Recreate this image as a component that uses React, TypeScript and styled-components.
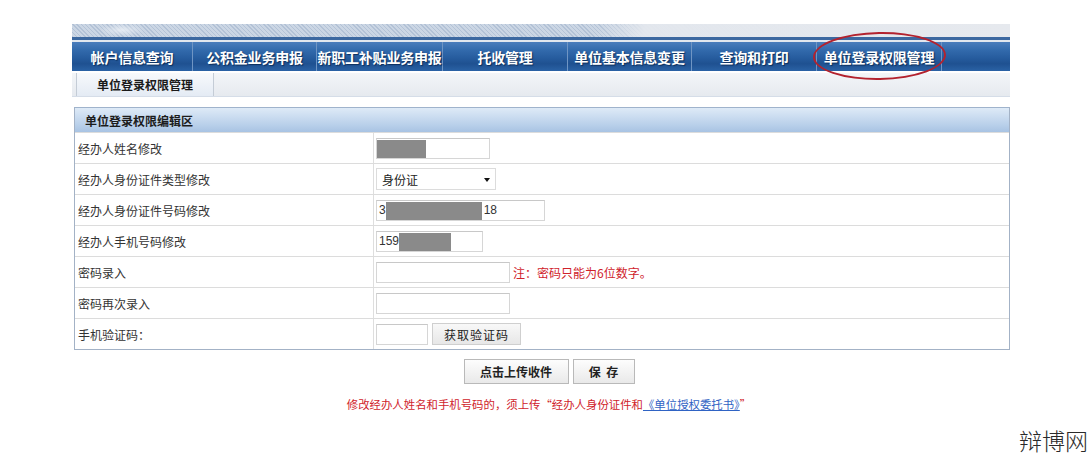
import React from "react"
import styled, { createGlobalStyle } from "styled-components"

const GlobalStyle = createGlobalStyle`
  html, body {
    margin: 0;
    padding: 0;
    background: #ffffff;
  }
  body {
    font-family: "Noto Sans CJK SC", "Liberation Sans", sans-serif;
    font-size: 12px;
    color: #333;
  }
`

const Page = styled.div`
  position: relative;
  width: 1092px;
  height: 459px;
  overflow: hidden;
  padding-top: 24px;
  box-sizing: border-box;
`
const Frame = styled.div`
  margin-left: 72px;
  width: 938px;
`
const Banner = styled.div`
  height: 13px;
  background:
    radial-gradient(ellipse 22px 6px at 50px 6px, rgba(235, 240, 246, 0.85), transparent),
    linear-gradient(100deg, transparent 0 56%, rgba(228, 232, 238, 0.95) 61%, #e6e9ee 100%),
    repeating-linear-gradient(45deg, #b3c2d6 0 1px, #cbd6e4 1px 3px);
  border-bottom: 3px solid #3c68a0;
  box-shadow: 0 2px 0 #e2e7ee;
`
const Nav = styled.nav`
  margin-top: 2px;
  height: 29px;
  display: flex;
  background: linear-gradient(
    #4a7dbc 0%,
    #3169ab 30%,
    #265c9e 55%,
    #1f5191 75%,
    #2a62a5 100%
  );
`
const NavItem = styled.div<{ w: number }>`
  position: relative;
  width: ${({ w }) => w}px;
  flex: none;
  display: flex;
  align-items: center;
  justify-content: center;
  border-right: 1px solid #6f95c4;
  box-sizing: border-box;
  color: #ffffff;
  font-size: 14px;
  font-weight: 700;
  white-space: nowrap;
  letter-spacing: -0.2px;
  text-shadow: 1px 1px 1px #0d2f5c;
`
const Circle = styled.div`
  position: absolute;
  left: -4px;
  top: -10px;
  width: 129px;
  height: 44px;
  border: 2px solid #b3222e;
  border-radius: 50%;
  transform: rotate(-1deg);
  pointer-events: none;
`
const SubBar = styled.div`
  margin-top: 2px;
  height: 23px;
  display: flex;
  background: linear-gradient(#f3f5f8, #e6eaef);
  border-bottom: 1px solid #d5dde8;
  padding-left: 4px;
`
const SubTab = styled.div`
  width: 136px;
  display: flex;
  align-items: center;
  justify-content: center;
  background: linear-gradient(#f7f9fc, #e4ebf4);
  border-left: 1px solid #c4ccd6;
  border-right: 1px solid #c4ccd6;
  font-size: 12px;
  font-weight: 700;
  color: #1a1a1a;
`
const Table = styled.div`
  margin: 10px 0 0 2px;
  border: 1px solid #a3b2c6;
  border-top-color: #9fb3cc;
`
const TableHead = styled.div`
  height: 24px;
  display: flex;
  align-items: center;
  padding-left: 10px;
  background: linear-gradient(#deeaf7, #b9d0ea 70%, #a8c3e3);
  font-weight: 700;
  font-size: 12px;
  color: #1c1c1c;
`
const Row = styled.div`
  display: grid;
  grid-template-columns: 299px 1fr;
  height: 30px;
  border-top: 1px solid #dcdcdc;
`
const Label = styled.div`
  display: flex;
  align-items: center;
  padding-left: 3px;
  border-right: 1px solid #dedede;
  color: #333;
  font-size: 12px;
`
const Cell = styled.div`
  display: flex;
  align-items: center;
  gap: 4px;
  padding-left: 2px;
`
const Field = styled.div<{ w: number }>`
  width: ${({ w }) => w}px;
  height: 21px;
  box-sizing: border-box;
  border: 1px solid #d6d6d6;
  border-top-color: #c8c8c8;
  display: flex;
  align-items: stretch;
  font-family: "Liberation Sans", "Noto Sans CJK SC", sans-serif;
  font-size: 12px;
  color: #333;
  background: #fff;
`
const FieldText = styled.span`
  display: flex;
  align-items: center;
  padding-left: 2px;
`
const Redact = styled.span<{ w: number }>`
  width: ${({ w }) => w}px;
  background: #8a8a8a;
  margin-top: 1px;
`
const SelectBox = styled.div`
  position: relative;
  width: 120px;
  height: 22px;
  box-sizing: border-box;
  border: 1px solid #dcdcdc;
  display: flex;
  align-items: center;
  padding-left: 5px;
  font-size: 12px;
  color: #222;
  &::after {
    content: "";
    position: absolute;
    right: 5px;
    top: 9px;
    border-left: 3px solid transparent;
    border-right: 3px solid transparent;
    border-top: 4px solid #111;
  }
`
const Note = styled.span`
  color: #d0232b;
  font-size: 12px;
  margin-left: -1px;
`
const GreyButton = styled.div<{ w: number; bold?: boolean }>`
  width: ${({ w }) => w}px;
  height: 22px;
  box-sizing: border-box;
  display: flex;
  align-items: center;
  justify-content: center;
  border: 1px solid #cfcfcf;
  background: linear-gradient(#f8f8f8, #e7e7e7);
  font-size: 12px;
  font-weight: ${({ bold }) => (bold ? 700 : 400)};
  color: #222;
  letter-spacing: ${({ bold }) => (bold ? "0" : "1px")};
`
const Actions = styled.div`
  margin-top: 9px;
  padding-left: 16px;
  display: flex;
  justify-content: center;
  gap: 4px;
`
const ActionButton = styled(GreyButton)`
  height: 25px;
  border-color: #b9b9b9;
  background: linear-gradient(#fdfdfd, #e9e9e9);
`
const Notice = styled.div`
  margin-top: 12px;
  padding-left: 16px;
  text-align: center;
  color: #d0232b;
  font-size: 11.4px;
  a {
    color: #2f63c4;
    text-decoration: underline;
  }
`
const Watermark = styled.div`
  position: absolute;
  left: 1019px;
  top: 423px;
  font-size: 23px;
  font-weight: 300;
  color: #2a2a2a;
  white-space: nowrap;
`

const navItems = [
  { t: "帐户信息查询", w: 121 },
  { t: "公积金业务申报", w: 124 },
  { t: "新职工补贴业务申报", w: 126 },
  { t: "托收管理", w: 125 },
  { t: "单位基本信息变更", w: 124 },
  { t: "查询和打印", w: 125 },
  { t: "单位登录权限管理", w: 125, circled: true },
]

export default function App() {
  return (
    <Page>
      <GlobalStyle />
      <Frame>
        <Banner />
        <Nav>
          {navItems.map((n) => (
            <NavItem key={n.t} w={n.w}>
              {n.t}
              {n.circled && <Circle />}
            </NavItem>
          ))}
        </Nav>
        <SubBar>
          <SubTab>单位登录权限管理</SubTab>
        </SubBar>
        <Table>
          <TableHead>单位登录权限编辑区</TableHead>
          <Row>
            <Label>经办人姓名修改</Label>
            <Cell>
              <Field w={114}>
                <Redact w={49} />
              </Field>
            </Cell>
          </Row>
          <Row>
            <Label>经办人身份证件类型修改</Label>
            <Cell>
              <SelectBox>身份证</SelectBox>
            </Cell>
          </Row>
          <Row>
            <Label>经办人身份证件号码修改</Label>
            <Cell>
              <Field w={169}>
                <FieldText>3</FieldText>
                <Redact w={96} />
                <FieldText>18</FieldText>
              </Field>
            </Cell>
          </Row>
          <Row>
            <Label>经办人手机号码修改</Label>
            <Cell>
              <Field w={107}>
                <FieldText>159</FieldText>
                <Redact w={52} />
              </Field>
            </Cell>
          </Row>
          <Row>
            <Label>密码录入</Label>
            <Cell>
              <Field w={134} />
              <Note>注：密码只能为6位数字。</Note>
            </Cell>
          </Row>
          <Row>
            <Label>密码再次录入</Label>
            <Cell>
              <Field w={134} />
            </Cell>
          </Row>
          <Row>
            <Label>手机验证码：</Label>
            <Cell>
              <Field w={52} />
              <GreyButton w={89}>获取验证码</GreyButton>
            </Cell>
          </Row>
        </Table>
        <Actions>
          <ActionButton w={105} bold>
            点击上传收件
          </ActionButton>
          <ActionButton w={62} bold>
            保&nbsp;&nbsp;存
          </ActionButton>
        </Actions>
        <Notice>
          修改经办人姓名和手机号码的，须上传“经办人身份证件和<a>《单位授权委托书》</a>”
        </Notice>
      </Frame>
      <Watermark>辩博网</Watermark>
    </Page>
  )
}
